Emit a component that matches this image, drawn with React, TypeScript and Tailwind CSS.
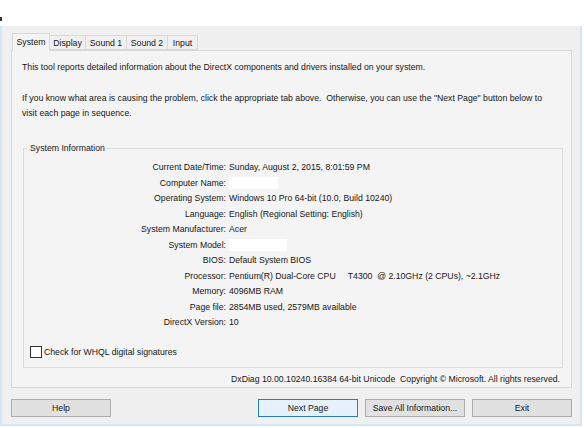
import React from "react";

const rows: { label: string; value?: string; blank?: number }[] = [
  { label: "Current Date/Time:", value: "Sunday, August 2, 2015, 8:01:59 PM" },
  { label: "Computer Name:", blank: 49 },
  { label: "Operating System:", value: "Windows 10 Pro 64-bit (10.0, Build 10240)" },
  { label: "Language:", value: "English (Regional Setting: English)" },
  { label: "System Manufacturer:", value: "Acer" },
  { label: "System Model:", blank: 58 },
  { label: "BIOS:", value: "Default System BIOS" },
  { label: "Processor:", value: "Pentium(R) Dual-Core CPU \u00a0\u00a0\u00a0\u00a0T4300 \u00a0@ 2.10GHz (2 CPUs), ~2.1GHz" },
  { label: "Memory:", value: "4096MB RAM" },
  { label: "Page file:", value: "2854MB used, 2579MB available" },
  { label: "DirectX Version:", value: "10" },
];

const tabs = ["Display", "Sound 1", "Sound 2", "Input"];

function Btn({ children, focused }: { children: React.ReactNode; focused?: boolean }) {
  return (
    <div
      className={
        "w-[100px] h-[18px] flex items-center justify-center border " +
        (focused ? "border-[#2a79c4] bg-[#e5f1fb]" : "border-[#adadad] bg-[#e1e1e1]")
      }
    >
      {children}
    </div>
  );
}

export default function App() {
  return (
    <div className="w-[584px] h-[428px] bg-white font-['Liberation_Sans',Arial,sans-serif] text-[8.7px] text-[#161616] leading-none overflow-hidden">
      <div className="h-[26px] pt-[17px]">
        <div className="w-[2px] h-[4px] bg-[#333]" />
      </div>
      <div className="w-[582px] h-[400px] bg-[#f0f0f0] border-l-2 border-r-2 border-b-2 border-[#d3e6f6] pl-[9px] pr-[8px] pt-[7px] flex flex-col">
        {/* tabs */}
        <div className="flex items-end h-[17px] pl-[1px] relative z-10">
          <div className="w-[38px] h-[18px] mb-[-1px] bg-[#f4f4f4] border border-b-0 border-[#d9d9d9] flex items-center justify-center pb-[1px] whitespace-nowrap">
            System
          </div>
          {tabs.map((t) => (
            <div
              key={t}
              className="h-[15px] border border-l-0 border-[#d9d9d9] bg-[#f0f0f0] flex items-center justify-center pt-[1px] whitespace-nowrap"
              style={{ width: t === "Display" ? 36 : t === "Input" ? 30 : 41 }}
            >
              {t}
            </div>
          ))}
        </div>
        {/* panel */}
        <div className="h-[338px] border border-[#d9d9d9] bg-[#f4f4f4] flex flex-col pl-[10px] pr-[8px]">
          <p className="mt-[9px] leading-[15px]">
            This tool reports detailed information about the DirectX components and drivers installed on your system.
          </p>
          <p className="mt-[16px] leading-[15px] pr-[2px]">
            If you know what area is causing the problem, click the appropriate tab above. &nbsp;Otherwise, you can use the "Next Page" button below to
            <br />
            visit each page in sequence.
          </p>
          {/* group box */}
          <div className="relative mt-[27px] ml-[1px] h-[220px] border border-[#dcdcdc] flex flex-col">
            <div className="absolute -top-[6px] left-[4px] bg-[#f4f4f4] px-[2px] leading-[10px]">System Information</div>
            <div className="mt-[11px] flex flex-col">
              {rows.map((r) => (
                <div key={r.label} className="flex items-center h-[15.5px]">
                  <div className="w-[205px] text-right pr-[3px]">{r.label}</div>
                  {r.blank ? (
                    <div className="h-[12px] bg-white" style={{ width: r.blank }} />
                  ) : (
                    <div className="whitespace-pre">{r.value}</div>
                  )}
                </div>
              ))}
            </div>
            <div className="mt-auto mb-[9px] ml-[6px] flex items-center gap-[2px]">
              <div className="w-[12px] h-[12px] border border-[#333] bg-white" />
              <span>Check for WHQL digital signatures</span>
            </div>
          </div>
          <div className="mt-[7px] text-right pr-[3px]">
            DxDiag 10.00.10240.16384 64-bit Unicode &nbsp;Copyright © Microsoft. All rights reserved.
          </div>
        </div>
        {/* buttons */}
        <div className="mt-[11px] flex">
          <Btn>Help</Btn>
          <div className="ml-auto flex gap-[7px]">
            <Btn focused>Next Page</Btn>
            <Btn>Save All Information...</Btn>
            <Btn>Exit</Btn>
          </div>
        </div>
      </div>
    </div>
  );
}
